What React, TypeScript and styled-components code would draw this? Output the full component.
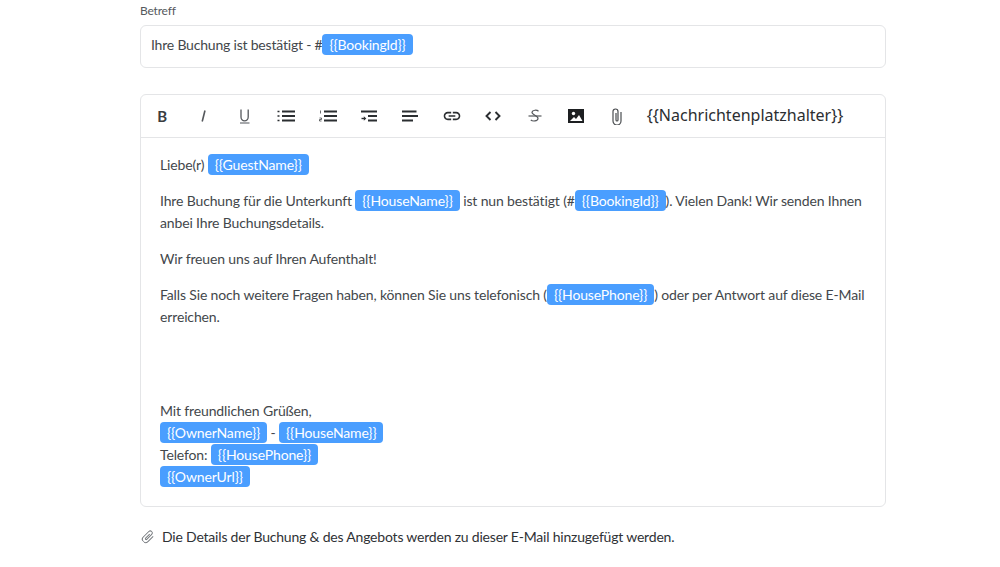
import React from 'react'
import styled, { createGlobalStyle } from 'styled-components'
import { MdLink } from 'react-icons/md'

const GlobalStyle = createGlobalStyle`
    html, body {
        margin: 0;
        background: #fff;
    }
    body {
        font-family: Lato, "Noto Sans", sans-serif;
        letter-spacing: -0.2px;
        color: #43474b;
    }
`

const Page = styled.div`
    box-sizing: border-box;
    width: 1000px;
    height: 567px;
    padding: 4px 114px 0 140px;
    overflow: hidden;
`

const Label = styled.div`
    font-size: 12px;
    line-height: 14px;
    color: #55595d;
    margin-bottom: 7px;
`

const SubjectBox = styled.div`
    box-sizing: border-box;
    height: 43px;
    border: 1px solid #e4e5e7;
    border-radius: 6px;
    padding: 0 10px 5px;
    display: flex;
    align-items: center;
    font-size: 14px;
    white-space: pre;
    margin-bottom: 26px;
`

const EditorCard = styled.div`
    border: 1px solid #e4e5e7;
    border-radius: 6px;
    margin-bottom: 21px;
`

const Toolbar = styled.div`
    box-sizing: border-box;
    height: 43px;
    border-bottom: 1px solid #e4e5e7;
    display: flex;
    align-items: center;
    padding-left: 9px;
    gap: 17.4px;
    color: #2b2e31;
`

const ToolIcon = styled.span<{ $muted?: boolean }>`
    width: 24px;
    height: 24px;
    display: flex;
    align-items: center;
    justify-content: center;
    font-size: 20px;
    color: ${(p) => (p.$muted ? '#4a4d50' : 'inherit')};
`

const BoldGlyph = styled.span`
    font-size: 15px;
    font-weight: 700;
    color: #3a3d40;
`

const PlaceholderMenu = styled.span`
    font-family: "Noto Sans", sans-serif;
    font-size: 16px;
    letter-spacing: 0;
    padding-bottom: 2px;
    color: #2b2e31;
`

const Body = styled.div`
    padding: 16px 19px 18px;
    font-size: 14px;
    line-height: 22px;
    letter-spacing: -0.14px;
`

const Para = styled.p`
    margin: 0 0 14px;
    &:last-child {
        margin-bottom: 0;
    }
`

const Chip = styled.span`
    display: inline-block;
    height: 21px;
    line-height: 21px;
    padding: 0 7px;
    border-radius: 4px;
    background: #4a9eff;
    color: #fff;
`

const Footer = styled.div`
    display: flex;
    align-items: center;
    gap: 5px;
    font-size: 14px;
    color: #2f3236;
`

const FooterClip = styled.span`
    width: 17px;
    display: flex;
    justify-content: center;
    color: #777b7f;
    transform: rotate(45deg);
`

const ClipIcon = ({ height = 17 }: { height?: number }) => (
    <svg width={(height * 10) / 17} height={height} viewBox="0 0 10 17" fill="none" stroke="currentColor" strokeWidth="1.200">
        <path d="M9 4v9a4 4 0 0 1-8 0V3.500a2.500 2.500 0 0 1 5 0V12a1 1 0 0 1-2 0V5" />
    </svg>
)

const tools = [
    // italic
    <svg width="16" height="16" viewBox="0 0 16 16" stroke="#55585c" strokeWidth="1.600"><path d="M10 2.500 7.200 13.500" /></svg>,
    // underline
    <svg width="16" height="16" viewBox="0 0 16 16" fill="none" stroke="#55585c" strokeWidth="1.300"><path d="M4 1.500v7.500a3.600 3.800 0 0 0 7.200 0V1.500" /><path d="M3 15h9.500" stroke="#8a8d90" strokeWidth="1.500" /></svg>,
    // bullets
    <svg width="18" height="12" viewBox="0 0 18 12" stroke="currentColor" strokeWidth="1.800"><path d="M5 1.500h13M5 6h13M5 10.500h13" /><path d="M0.500 1.500h2M0.500 6h2M0.500 10.500h2" strokeWidth="1.500" /></svg>,
    // numbered
    <svg width="18" height="12" viewBox="0 0 18 12" stroke="currentColor" strokeWidth="1.800"><path d="M5 1.500h13M5 6h13M5 10.500h13" /><path d="M1.500 0.500v3M0.500 8h2v1.500h-2v1.500h2" strokeWidth="0.700" fill="none" /></svg>,
    // indent
    <svg width="18" height="12" viewBox="0 0 18 12" stroke="currentColor" strokeWidth="1.800"><path d="M1 1.500h16M8 6h9M8 10.500h9" /><path d="M1.500 8.500h3" strokeWidth="1.400" /><path d="M3.800 6.300v4.400l2.500-2.200z" fill="currentColor" stroke="none" /></svg>,
    // align
    <svg width="18" height="12" viewBox="0 0 18 12" stroke="currentColor" strokeWidth="1.800"><path d="M1 1.500h14.500M1 6h16M1 10.500h11" /></svg>,
    <MdLink />,
    // code
    <svg width="16" height="10" viewBox="0 0 16 10" fill="none" stroke="currentColor" strokeWidth="1.900"><path d="M5.500 1 1.500 5l4 4M10.500 1l4 4-4 4" /></svg>,
    // strikethrough
    <svg width="14" height="14" viewBox="0 0 14 14" fill="none" stroke="#55585c" strokeWidth="1.200"><path d="M10.500 2.200C9 .8 4.500.7 4 3.200c-.5 3 6.300 3 6 6.300-.3 3-5.500 3-7.200 1.500" /><path d="M0.500 7h13" /></svg>,
    // image
    <svg width="16" height="14" viewBox="0 0 16 14"><rect width="16" height="14" fill="#1d1f21" /><circle cx="5.500" cy="4.500" r="1.700" fill="#fff" /><path d="M2 12 6 8l2 2 3-4 3.500 6z" fill="#fff" /></svg>,
]

const App = () => {
    return (
        <Page>
            <GlobalStyle />
            <Label>Betreff</Label>
            <SubjectBox>
                Ihre Buchung ist bestätigt - #<Chip>{'{{BookingId}}'}</Chip>
            </SubjectBox>
            <EditorCard>
                <Toolbar>
                    <ToolIcon><BoldGlyph>B</BoldGlyph></ToolIcon>
                    {tools.map((icon, index) => (
                        <ToolIcon key={index}>{icon}</ToolIcon>
                    ))}
                    <ToolIcon $muted><ClipIcon /></ToolIcon>
                    <PlaceholderMenu>{'{{Nachrichtenplatzhalter}}'}</PlaceholderMenu>
                </Toolbar>
                <Body>
                    <Para>Liebe(r) <Chip>{'{{GuestName}}'}</Chip></Para>
                    <Para>
                        Ihre Buchung für die Unterkunft <Chip>{'{{HouseName}}'}</Chip> ist nun bestätigt (#<Chip>{'{{BookingId}}'}</Chip>). Vielen Dank! Wir senden Ihnen anbei Ihre Buchungsdetails.
                    </Para>
                    <Para>Wir freuen uns auf Ihren Aufenthalt!</Para>
                    <Para>
                        Falls Sie noch weitere Fragen haben, können Sie uns telefonisch (<Chip>{'{{HousePhone}}'}</Chip>) oder per Antwort auf diese E-Mail erreichen.
                    </Para>
                    <Para><br /><br /></Para>
                    <Para>
                        Mit freundlichen Grüßen,<br />
                        <Chip>{'{{OwnerName}}'}</Chip> - <Chip>{'{{HouseName}}'}</Chip><br />
                        Telefon: <Chip>{'{{HousePhone}}'}</Chip><br />
                        <Chip>{'{{OwnerUrl}}'}</Chip>
                    </Para>
                </Body>
            </EditorCard>
            <Footer>
                <FooterClip><ClipIcon height={14} /></FooterClip>
                Die Details der Buchung &amp; des Angebots werden zu dieser E-Mail hinzugefügt werden.
            </Footer>
        </Page>
    )
}

export default App
